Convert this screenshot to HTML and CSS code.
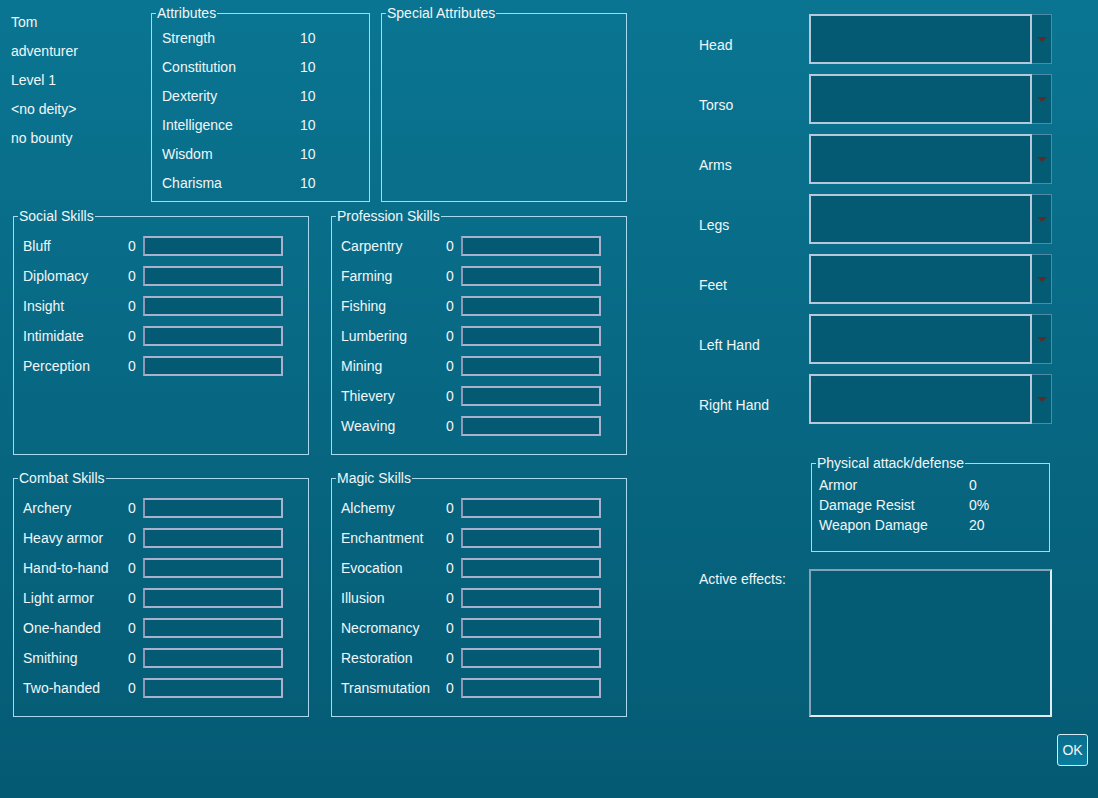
FILE: index.html
```html
<!DOCTYPE html>
<html lang="en">
<head>
  <meta charset="UTF-8">
  <title>Character Sheet</title>
  <link rel="stylesheet" href="styles.css">
</head>
<body>

<div class="screen">
  <div class="main">
    <div class="top-row">
      <div class="info">
        <div>Tom</div>
        <div>adventurer</div>
        <div>Level 1</div>
        <div>&lt;no deity&gt;</div>
        <div>no bounty</div>
      </div>

      <fieldset class="group attributes">
        <legend>Attributes</legend>
        <div class="attr-row"><span class="attr-name">Strength</span><span>10</span></div>
        <div class="attr-row"><span class="attr-name">Constitution</span><span>10</span></div>
        <div class="attr-row"><span class="attr-name">Dexterity</span><span>10</span></div>
        <div class="attr-row"><span class="attr-name">Intelligence</span><span>10</span></div>
        <div class="attr-row"><span class="attr-name">Wisdom</span><span>10</span></div>
        <div class="attr-row"><span class="attr-name">Charisma</span><span>10</span></div>
      </fieldset>

      <fieldset class="group special">
        <legend>Special Attributes</legend>
      </fieldset>
    </div>

    <div class="skills">
      <fieldset class="group skill-group">
        <legend>Social Skills</legend>
        <div class="skill"><span class="skill-name">Bluff</span><span class="skill-val">0</span><span class="bar"></span></div>
        <div class="skill"><span class="skill-name">Diplomacy</span><span class="skill-val">0</span><span class="bar"></span></div>
        <div class="skill"><span class="skill-name">Insight</span><span class="skill-val">0</span><span class="bar"></span></div>
        <div class="skill"><span class="skill-name">Intimidate</span><span class="skill-val">0</span><span class="bar"></span></div>
        <div class="skill"><span class="skill-name">Perception</span><span class="skill-val">0</span><span class="bar"></span></div>
      </fieldset>

      <fieldset class="group skill-group">
        <legend>Profession Skills</legend>
        <div class="skill"><span class="skill-name">Carpentry</span><span class="skill-val">0</span><span class="bar"></span></div>
        <div class="skill"><span class="skill-name">Farming</span><span class="skill-val">0</span><span class="bar"></span></div>
        <div class="skill"><span class="skill-name">Fishing</span><span class="skill-val">0</span><span class="bar"></span></div>
        <div class="skill"><span class="skill-name">Lumbering</span><span class="skill-val">0</span><span class="bar"></span></div>
        <div class="skill"><span class="skill-name">Mining</span><span class="skill-val">0</span><span class="bar"></span></div>
        <div class="skill"><span class="skill-name">Thievery</span><span class="skill-val">0</span><span class="bar"></span></div>
        <div class="skill"><span class="skill-name">Weaving</span><span class="skill-val">0</span><span class="bar"></span></div>
      </fieldset>

      <fieldset class="group skill-group">
        <legend>Combat Skills</legend>
        <div class="skill"><span class="skill-name">Archery</span><span class="skill-val">0</span><span class="bar"></span></div>
        <div class="skill"><span class="skill-name">Heavy armor</span><span class="skill-val">0</span><span class="bar"></span></div>
        <div class="skill"><span class="skill-name">Hand-to-hand</span><span class="skill-val">0</span><span class="bar"></span></div>
        <div class="skill"><span class="skill-name">Light armor</span><span class="skill-val">0</span><span class="bar"></span></div>
        <div class="skill"><span class="skill-name">One-handed</span><span class="skill-val">0</span><span class="bar"></span></div>
        <div class="skill"><span class="skill-name">Smithing</span><span class="skill-val">0</span><span class="bar"></span></div>
        <div class="skill"><span class="skill-name">Two-handed</span><span class="skill-val">0</span><span class="bar"></span></div>
      </fieldset>

      <fieldset class="group skill-group">
        <legend>Magic Skills</legend>
        <div class="skill"><span class="skill-name">Alchemy</span><span class="skill-val">0</span><span class="bar"></span></div>
        <div class="skill"><span class="skill-name">Enchantment</span><span class="skill-val">0</span><span class="bar"></span></div>
        <div class="skill"><span class="skill-name">Evocation</span><span class="skill-val">0</span><span class="bar"></span></div>
        <div class="skill"><span class="skill-name">Illusion</span><span class="skill-val">0</span><span class="bar"></span></div>
        <div class="skill"><span class="skill-name">Necromancy</span><span class="skill-val">0</span><span class="bar"></span></div>
        <div class="skill"><span class="skill-name">Restoration</span><span class="skill-val">0</span><span class="bar"></span></div>
        <div class="skill"><span class="skill-name">Transmutation</span><span class="skill-val">0</span><span class="bar"></span></div>
      </fieldset>
    </div>
  </div>

  <div class="side">
    <div class="slot"><span class="slot-name">Head</span><div class="combo"><div class="combo-box"></div><div class="combo-btn"><svg class="arrow" width="10" height="5" viewBox="0 0 10 5"><path d="M0 0H10L5 5Z"/></svg></div></div></div>
    <div class="slot"><span class="slot-name">Torso</span><div class="combo"><div class="combo-box"></div><div class="combo-btn"><svg class="arrow" width="10" height="5" viewBox="0 0 10 5"><path d="M0 0H10L5 5Z"/></svg></div></div></div>
    <div class="slot"><span class="slot-name">Arms</span><div class="combo"><div class="combo-box"></div><div class="combo-btn"><svg class="arrow" width="10" height="5" viewBox="0 0 10 5"><path d="M0 0H10L5 5Z"/></svg></div></div></div>
    <div class="slot"><span class="slot-name">Legs</span><div class="combo"><div class="combo-box"></div><div class="combo-btn"><svg class="arrow" width="10" height="5" viewBox="0 0 10 5"><path d="M0 0H10L5 5Z"/></svg></div></div></div>
    <div class="slot"><span class="slot-name">Feet</span><div class="combo"><div class="combo-box"></div><div class="combo-btn"><svg class="arrow" width="10" height="5" viewBox="0 0 10 5"><path d="M0 0H10L5 5Z"/></svg></div></div></div>
    <div class="slot"><span class="slot-name">Left Hand</span><div class="combo"><div class="combo-box"></div><div class="combo-btn"><svg class="arrow" width="10" height="5" viewBox="0 0 10 5"><path d="M0 0H10L5 5Z"/></svg></div></div></div>
    <div class="slot"><span class="slot-name">Right Hand</span><div class="combo"><div class="combo-box"></div><div class="combo-btn"><svg class="arrow" width="10" height="5" viewBox="0 0 10 5"><path d="M0 0H10L5 5Z"/></svg></div></div></div>

    <fieldset class="group physical">
      <legend>Physical attack/defense</legend>
      <div class="phys-row"><span class="phys-name">Armor</span><span>0</span></div>
      <div class="phys-row"><span class="phys-name">Damage Resist</span><span>0%</span></div>
      <div class="phys-row"><span class="phys-name">Weapon Damage</span><span>20</span></div>
    </fieldset>

    <div class="effects">
      <span class="effects-label">Active effects:</span>
      <div class="effects-box"></div>
    </div>

    <div class="actions">
      <button class="ok-btn">OK</button>
    </div>
  </div>
</div>

</body>
</html>
```

FILE: styles.css
```css
html, body {
  margin: 0;
  padding: 0;
}
body {
  width: 1098px;
  height: 798px;
  overflow: hidden;
  font-family: "Liberation Sans", Arial, sans-serif;
  font-size: 14px;
  color: #f2f6f8;
  background: linear-gradient(#0a7592, #055a73);
}
.screen {
  display: flex;
}
.main {
  width: 627px;
}
.top-row {
  display: flex;
  padding-top: 6px;
}
.info {
  width: 140px;
  padding: 2px 0 0 11px;
  line-height: 29px;
}
.group {
  margin: 0;
  padding: 0;
  border: 1px solid #a8d9ef;
  min-width: 0;
}
.group legend {
  margin-left: 4px;
  padding: 0 1px;
  line-height: 14px;
  color: #f2f6f8;
}
.attributes {
  width: 219px;
  box-sizing: border-box;
  padding: 4px 0 3px 0;
}
.attr-row {
  display: flex;
  line-height: 29px;
  margin-left: 10px;
}
.attr-name {
  width: 138px;
}
.special {
  width: 246px;
  box-sizing: border-box;
  margin-left: 11px;
}
.skills {
  display: grid;
  grid-template-columns: 296px 296px;
  column-gap: 22px;
  row-gap: 16px;
  margin: 7px 0 0 13px;
}
.skill-group {
  box-sizing: border-box;
  height: 246px;
  padding: 8px 0 0 0;
}
.skill {
  display: flex;
  align-items: center;
  height: 30px;
  margin-left: 9px;
}
.skill-name {
  width: 105px;
}
.skill-val {
  width: 15px;
}
.bar {
  width: 140px;
  height: 20px;
  box-sizing: border-box;
  background: #045a72;
  border: 2px solid #a9b1cc;
  border-left-color: #8f99b6;
}
.side {
  margin-left: 72px;
  width: 389px;
  padding-top: 14px;
}
.slot {
  display: flex;
  height: 50px;
  margin-bottom: 10px;
}
.slot-name {
  width: 110px;
  padding-top: 23px;
}
.combo {
  display: flex;
}
.combo-box {
  width: 223px;
  height: 50px;
  box-sizing: border-box;
  background: #045a72;
  border: 2px solid #b6c8dc;
}
.combo-btn {
  width: 20px;
  height: 50px;
  box-sizing: border-box;
  background: #045b74;
  border: 1px solid #4f8aa6;
  border-left: none;
  display: flex;
  align-items: center;
  justify-content: center;
}
.arrow {
  display: block;
  fill: #5e2c28;
}
.physical {
  width: 239px;
  box-sizing: border-box;
  margin: 32px 0 0 112px;
  padding: 5px 0 16px 0;
}
.phys-row {
  display: flex;
  line-height: 20px;
  margin-left: 7px;
}
.phys-name {
  width: 150px;
}
.effects {
  display: flex;
  margin-top: 17px;
}
.effects-label {
  width: 110px;
  padding-top: 2px;
}
.effects-box {
  width: 243px;
  height: 148px;
  box-sizing: border-box;
  background: #045c74;
  border: 2px solid #e2ecf2;
  border-top-color: #86a2b8;
  border-left-color: #86a2b8;
}
.actions {
  display: flex;
  justify-content: flex-end;
  margin-top: 17px;
}
.ok-btn {
  width: 31px;
  height: 32px;
  padding: 0;
  border: 1px solid #d6ecf4;
  border-radius: 3px;
  background: linear-gradient(#0a6e8c, #0a7d9e);
  color: #f2f6f8;
  font-family: "Liberation Sans", Arial, sans-serif;
  font-size: 14px;
}
```
